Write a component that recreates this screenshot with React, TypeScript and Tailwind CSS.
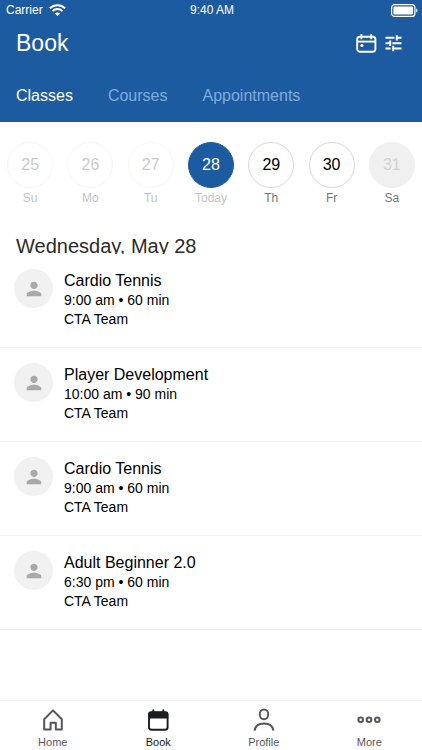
import React from 'react';
import { MdPerson } from 'react-icons/md';
import clsx from 'clsx';

const TABS = ['Classes', 'Courses', 'Appointments'];

const DAYS = [
  { date: 25, label: 'Su', state: 'past' },
  { date: 26, label: 'Mo', state: 'past' },
  { date: 27, label: 'Tu', state: 'past' },
  { date: 28, label: 'Today', state: 'selected' },
  { date: 29, label: 'Th', state: 'open' },
  { date: 30, label: 'Fr', state: 'open' },
  { date: 31, label: 'Sa', state: 'closed' },
];

const CLASSES = [
  { name: 'Cardio Tennis', time: '9:00 am', length: '60 min', staff: 'CTA Team' },
  { name: 'Player Development', time: '10:00 am', length: '90 min', staff: 'CTA Team' },
  { name: 'Cardio Tennis', time: '9:00 am', length: '60 min', staff: 'CTA Team' },
  { name: 'Adult Beginner 2.0', time: '6:30 pm', length: '60 min', staff: 'CTA Team' },
];

function WifiIcon() {
  return (
    <svg width="17" height="12" viewBox="0 0 17 12" fill="none" stroke="currentColor" strokeWidth="2">
      <path d="M0.8 4.3C5 0.2 12 0.2 16.2 4.3" />
      <path d="M3.4 7.1C6.2 4.4 10.8 4.4 13.6 7.1" />
      <path d="M8.5 12L5.9 9.4C7.4 8.1 9.6 8.1 11.1 9.4Z" fill="currentColor" stroke="none" />
    </svg>
  );
}

function BatteryIcon() {
  return (
    <svg width="27" height="13" viewBox="0 0 27 13" fill="none">
      <rect x="0.6" y="0.6" width="23.3" height="11.8" rx="3" stroke="currentColor" strokeWidth="1.2" />
      <rect x="2.4" y="2.4" width="19.7" height="8.2" rx="1.3" fill="currentColor" />
      <path d="M25.2 4.4C26.9 5.1 26.9 7.9 25.2 8.6Z" fill="currentColor" />
    </svg>
  );
}

function CalendarIcon() {
  return (
    <svg width="21" height="19" viewBox="0 0 21 19" fill="none" stroke="currentColor" strokeWidth="1.9">
      <rect x="1.2" y="2.8" width="18.2" height="14.9" rx="2.6" />
      <path d="M1.2 7.6H19.4" />
      <path d="M5.4 0.8V4.4M15.2 0.8V4.4" strokeLinecap="round" />
      <circle cx="5.9" cy="11.5" r="1.6" fill="currentColor" stroke="none" />
    </svg>
  );
}

function FilterIcon() {
  return (
    <svg width="17" height="17" viewBox="0 0 17 17" fill="none" stroke="currentColor" strokeWidth="2">
      <path d="M0.5 2.8H9.5M11.8 2.8H16.5M11.8 0.2V5.6" />
      <path d="M0.5 8.2H5.2M7.4 8.2H16.5M5.2 5.5V10.9" />
      <path d="M0.5 13.5H5.6M8.2 13.5H16.5M8.2 10.8V16.2" />
    </svg>
  );
}

function HomeIcon() {
  return (
    <svg width="24" height="24" viewBox="0 0 24 24" fill="none" stroke="currentColor" strokeWidth="2" strokeLinejoin="round">
      <path d="M3.2 11.2L12 2.4L20.8 11.2V21.4H14.8V14.8H9.6V21.4H3.2Z" />
    </svg>
  );
}

function BookIcon() {
  return (
    <svg width="24" height="24" viewBox="0 0 24 24" fill="none" stroke="currentColor">
      <rect x="3" y="4.3" width="18.6" height="17.4" rx="2.4" strokeWidth="1.9" />
      <path d="M2.4 10.6V6C2.4 4.6 3.2 3.8 4.6 3.8H20C21.4 3.8 22.2 4.6 22.2 6V10.6Z" fill="currentColor" stroke="none" />
      <path d="M7.3 2.2V5M17.3 2.2V5" strokeWidth="2" strokeLinecap="round" />
    </svg>
  );
}

function ProfileIcon() {
  return (
    <svg width="24" height="24" viewBox="0 0 24 24" fill="none" stroke="currentColor" strokeWidth="2">
      <ellipse cx="12" cy="6.3" rx="4.3" ry="4.9" />
      <path d="M2.6 22.6C3.2 18 6.4 15.6 12 15.6S20.8 18 21.4 22.6" />
    </svg>
  );
}

function MoreIcon() {
  return (
    <svg width="24" height="24" viewBox="0 0 24 24" fill="none" stroke="currentColor" strokeWidth="2">
      <circle cx="3.7" cy="11.8" r="2.3" />
      <circle cx="12" cy="11.8" r="2.3" />
      <circle cx="20.3" cy="11.8" r="2.3" />
    </svg>
  );
}

const NAV = [
  { label: 'Home', icon: HomeIcon },
  { label: 'Book', icon: BookIcon, active: true },
  { label: 'Profile', icon: ProfileIcon },
  { label: 'More', icon: MoreIcon },
];

export default function App() {
  return (
    <div className="flex min-h-screen flex-col bg-white font-['Liberation_Sans',Arial,sans-serif] text-black">
      <header className="bg-[#1d5ba1] text-white">
        <div className="grid h-5 grid-cols-3 items-center pr-1 pl-1.5 text-xs">
          <div className="flex items-center gap-1.5">
            <span>Carrier</span>
            <WifiIcon />
          </div>
          <span className="text-center">9:40 AM</span>
          <div className="flex justify-end">
            <BatteryIcon />
          </div>
        </div>

        <div className="flex h-[46px] items-center justify-between pr-5 pl-4">
          <h1 className="text-[23px]">Book</h1>
          <div className="flex items-center gap-2">
            <button type="button" aria-label="Calendar">
              <CalendarIcon />
            </button>
            <button type="button" aria-label="Filters">
              <FilterIcon />
            </button>
          </div>
        </div>

        <nav className="flex h-14 items-center gap-[35px] px-4 pt-1">
          {TABS.map((tab, i) => (
            <button key={tab} type="button" className={clsx('text-base', i === 0 ? 'text-white' : 'text-[#7fabdb]')}>
              {tab}
            </button>
          ))}
        </nav>
      </header>

      <main className="flex-1">
        <div className="grid grid-cols-7 pt-5">
          {DAYS.map((day) => (
            <button key={day.date} type="button" className="flex flex-col items-center">
              <span
                className={clsx(
                  'flex size-[46px] items-center justify-center rounded-full border text-base',
                  day.state === 'past' && 'border-[#f6f6f6] text-[#cbcbcb]',
                  day.state === 'selected' && 'border-[#1d5ba1] bg-[#1d5ba1] text-white',
                  day.state === 'open' && 'border-[#d9d9d9] text-black',
                  day.state === 'closed' && 'border-[#f0f0f0] bg-[#f0f0f0] text-[#d2d2d2]',
                )}
              >
                {day.date}
              </span>
              <span
                className={clsx(
                  'text-xs leading-5',
                  day.state === 'past' || day.state === 'selected' ? 'text-[#c4c4c4]' : 'text-[#757575]',
                )}
              >
                {day.label}
              </span>
            </button>
          ))}
        </div>

        {/* the heading box is shorter than its line, so descenders are cut off */}
        <h2 className="mt-[26px] h-5 overflow-hidden px-4 text-xl leading-6 text-[#2b2b2b]">Wednesday, May 28</h2>

        <ul>
          {CLASSES.map((item, i) => (
            <li key={i} className="flex h-[94px] gap-[11px] border-b border-[#f1f1f1] px-3.5 pt-[15px]">
              <div className="flex size-[39px] shrink-0 items-center justify-center rounded-full bg-[#f1f1f1]">
                <MdPerson size={22} className="text-[#a9a9a9]" />
              </div>
              <div className="pt-0.5 text-sm leading-[19px]">
                <h3 className="text-base leading-5">{item.name}</h3>
                <p>
                  {item.time} • {item.length}
                </p>
                <p>{item.staff}</p>
              </div>
            </li>
          ))}
        </ul>
      </main>

      <nav className="grid h-[50px] grid-cols-4 border-t border-[#f2f2f2]">
        {NAV.map(({ label, icon: Icon, active }) => (
          <a
            key={label}
            href="#"
            className={clsx('flex flex-col items-center pt-[7px] text-[11px]', active ? 'text-[#1b1d22]' : 'text-[#55565b]')}
          >
            <Icon />
            <span className="leading-5">{label}</span>
          </a>
        ))}
      </nav>
    </div>
  );
}
